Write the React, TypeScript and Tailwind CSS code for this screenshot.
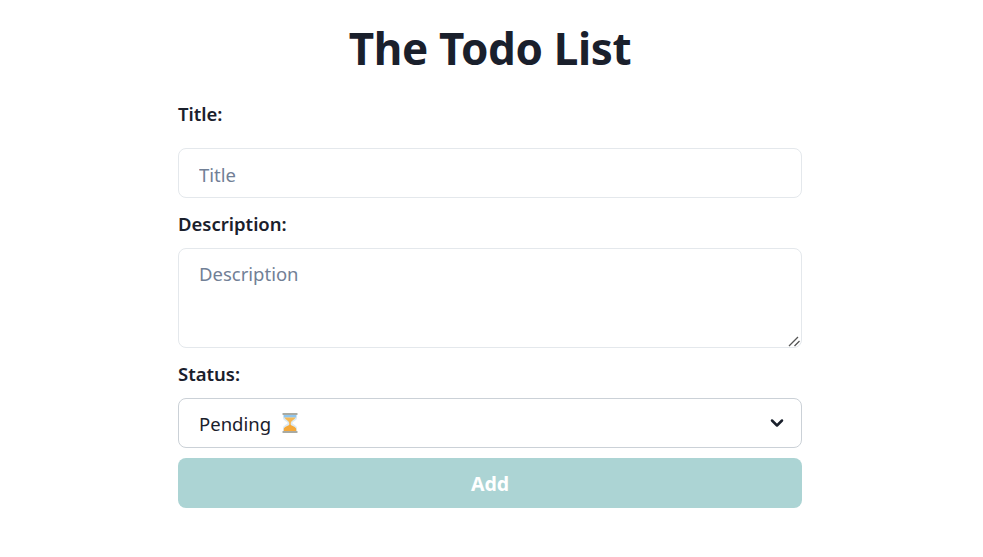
import { ChevronDown } from 'lucide-react';

function Hourglass() {
  return (
    <svg width="20" height="22" viewBox="0 0 20 22" className="ml-[9px]">
      <path d="M3 2.500h14v3.500c0 2.600-4.600 3.600-4.600 5s4.600 2.400 4.600 5v3.500H3V16c0-2.600 4.600-3.600 4.600-5S3 8.600 3 6z" fill="#dcebf5" />
      <path d="M3.800 3h12.400v2.500H3.800z" fill="#8fc6ee" />
      <path d="M4.500 5.500h11c-.4 2-4.300 3-4.700 5.500v2h-1.600v-2C8.800 8.500 4.900 7.500 4.500 5.500z" fill="#f7b955" />
      <path d="M3.800 19.500V17c0-2 4.300-3 6.200-4.500 1.900 1.500 6.200 2.500 6.200 4.500v2.500z" fill="#f5a93a" />
      <rect x="2.500" y="1" width="15" height="2" rx=".5" fill="#a8aaa2" />
      <rect x="2.500" y="19" width="15" height="2" rx=".5" fill="#a8aaa2" />
    </svg>
  );
}

export default function App() {
  return (
    <div className="w-[980px] flex flex-col items-center font-['Noto_Sans','Open_Sans',sans-serif] text-[#1a202c]">
      <h1 className="mt-[21px] text-[44px] leading-[54px] font-bold tracking-[-0.35px]">The Todo List</h1>
      <form className="w-[624px] mt-[25px] flex flex-col">
        <label className="text-[18.5px] leading-[28px] font-semibold">Title:</label>
        <input
          placeholder="Title"
          className="mt-[20px] h-[50px] px-[20px] pt-[3px] text-[18.5px] border border-[#e4e8ec] rounded-[8px] outline-none placeholder:text-[#718096]"
        />
        <label className="mt-[12px] text-[18.5px] leading-[28px] font-semibold">Description:</label>
        <div className="relative mt-[10px] h-[100px]">
          <textarea
            placeholder="Description"
            className="block w-full h-full px-[20px] py-[11px] text-[18.5px] leading-[28px] border border-[#e4e8ec] rounded-[8px] outline-none resize-none placeholder:text-[#718096]"
          />
          {/* resize grip */}
          <svg width="12" height="12" viewBox="0 0 12 12" className="absolute right-[2px] bottom-[1px] pointer-events-none">
            <path d="M1 11 10 2M6.500 11 11.500 6" stroke="#555" strokeWidth="1.300" fill="none" />
          </svg>
        </div>
        <label className="mt-[12px] text-[18.5px] leading-[28px] font-semibold">Status:</label>
        <div className="mt-[10px] h-[50px] pl-[20px] pr-[14px] flex items-center border border-[#cbd1d7] rounded-[8px] text-[18.5px] text-[#1a202c]">
          <span className="pt-[1px]">Pending</span>
          <Hourglass />
          <ChevronDown size={20} strokeWidth={3} className="ml-auto text-[#1a202c]" />
        </div>
        <button type="button" className="mt-[10px] h-[50px] pt-[1px] rounded-[8px] bg-[#acd4d4] text-white text-[19.5px] font-bold">
          Add
        </button>
      </form>
    </div>
  );
}
